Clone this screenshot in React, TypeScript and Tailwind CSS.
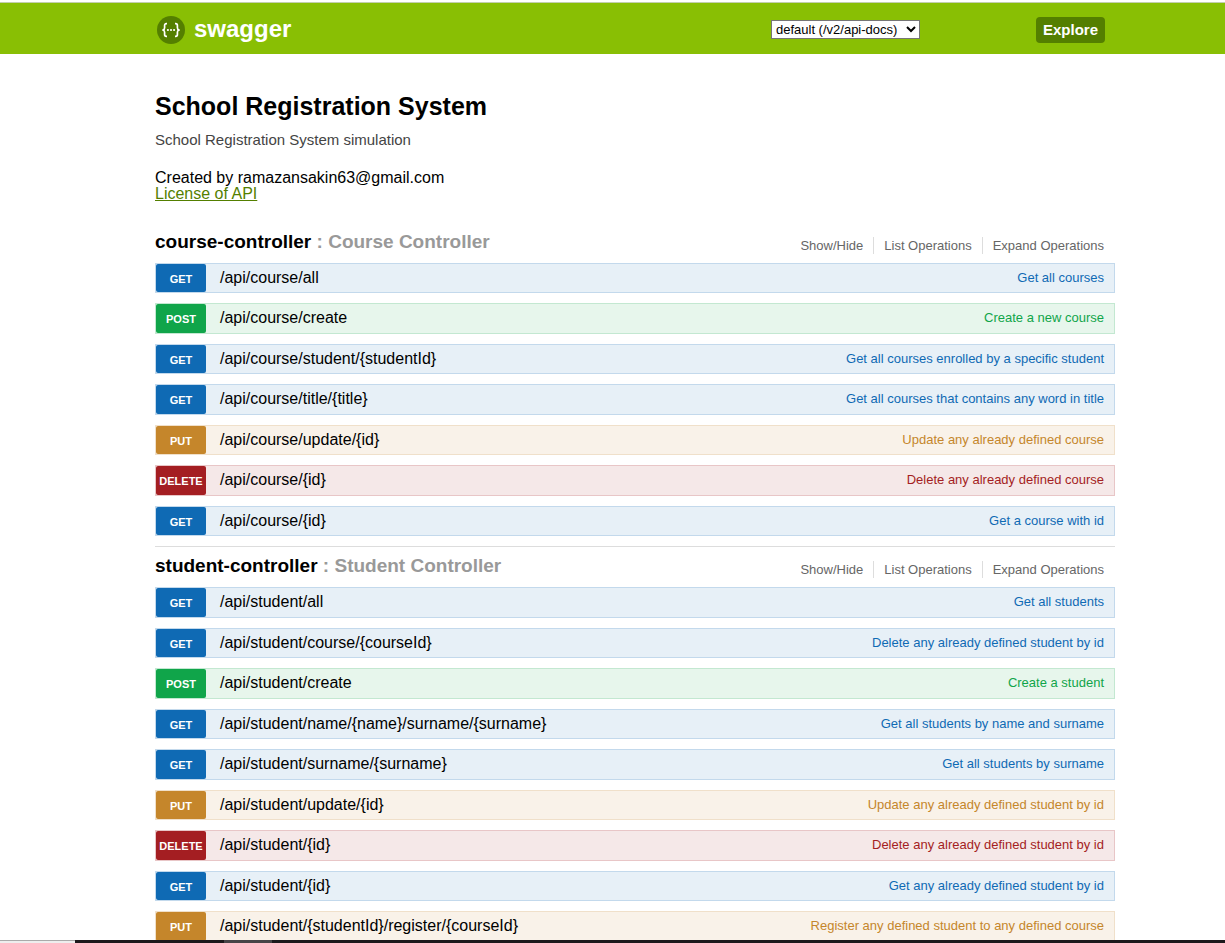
type Method = 'GET' | 'POST' | 'PUT' | 'DELETE';
type Operation = [Method, string, string];

const courseOperations: Operation[] = [
  ['GET', '/api/course/all', 'Get all courses'],
  ['POST', '/api/course/create', 'Create a new course'],
  ['GET', '/api/course/student/{studentId}', 'Get all courses enrolled by a specific student'],
  ['GET', '/api/course/title/{title}', 'Get all courses that contains any word in title'],
  ['PUT', '/api/course/update/{id}', 'Update any already defined course'],
  ['DELETE', '/api/course/{id}', 'Delete any already defined course'],
  ['GET', '/api/course/{id}', 'Get a course with id'],
];

const studentOperations: Operation[] = [
  ['GET', '/api/student/all', 'Get all students'],
  ['GET', '/api/student/course/{courseId}', 'Delete any already defined student by id'],
  ['POST', '/api/student/create', 'Create a student'],
  ['GET', '/api/student/name/{name}/surname/{surname}', 'Get all students by name and surname'],
  ['GET', '/api/student/surname/{surname}', 'Get all students by surname'],
  ['PUT', '/api/student/update/{id}', 'Update any already defined student by id'],
  ['DELETE', '/api/student/{id}', 'Delete any already defined student by id'],
  ['GET', '/api/student/{id}', 'Get any already defined student by id'],
  ['PUT', '/api/student/{studentId}/register/{courseId}', 'Register any defined student to any defined course'],
];

const styles: Record<Method, { row: string; badge: string; text: string }> = {
  GET: { row: 'border-[#c3d9ec] bg-[#e7f0f7]', badge: 'bg-[#0f6ab4]', text: 'text-[#0f6ab4]' },
  POST: { row: 'border-[#c3e8d1] bg-[#e7f6ec]', badge: 'bg-[#10a54a]', text: 'text-[#10a54a]' },
  PUT: { row: 'border-[#f0e0ca] bg-[#f9f2e9]', badge: 'bg-[#c5862b]', text: 'text-[#c5862b]' },
  DELETE: { row: 'border-[#e8c6c7] bg-[#f5e8e8]', badge: 'bg-[#a41e22]', text: 'text-[#a41e22]' },
};

function OperationRow({ operation: [method, path, summary] }: { operation: Operation }) {
  const style = styles[method];
  return (
    <li className={`flex items-stretch border ${style.row}`}>
      <a
        href="#operation"
        className={`flex w-[50px] shrink-0 items-center justify-center rounded-xs pt-0.5 text-[11px] font-bold text-white ${style.badge}`}
      >
        {method}
      </a>
      <a href="#operation" className="pl-3.5 text-base leading-7 text-black">
        {path}
      </a>
      <a href="#operation" className={`ml-auto pr-2.5 text-[13px] leading-7 ${style.text}`}>
        {summary}
      </a>
    </li>
  );
}

function Resource({
  name,
  description,
  operations,
  listClass,
}: {
  name: string;
  description: string;
  operations: Operation[];
  listClass: string;
}) {
  return (
    <section>
      <div className="flex h-10 items-center justify-between pr-px">
        <h2 className="pb-0.5 text-[19px] font-bold text-[#999]">
          <a href="#resource" className="text-black">
            {name}
          </a>{' '}
          : {description}
        </h2>
        <ul className="flex divide-x divide-[#ddd] pt-1 text-[13px] leading-[17px] text-[#666]">
          <li className="px-2.5">
            <a href="#show">Show/Hide</a>
          </li>
          <li className="px-2.5">
            <a href="#list">List Operations</a>
          </li>
          <li className="px-2.5">
            <a href="#expand">Expand Operations</a>
          </li>
        </ul>
      </div>
      <ul className={`grid auto-rows-fr gap-2.5 ${listClass}`}>
        {operations.map((operation) => (
          <OperationRow key={operation[0] + operation[1]} operation={operation} />
        ))}
      </ul>
    </section>
  );
}

function Logo() {
  return (
    <svg viewBox="0 0 28 28" className="size-7" aria-hidden="true">
      <circle cx="14" cy="14" r="14" fill="#547f00" />
      <g fill="none" stroke="#fff" strokeWidth="1.7" strokeLinejoin="round">
        <path d="M10 7.7H9.3C8 7.7 7.6 8.4 7.6 9.6v2.2c0 1.3-.5 2-1.7 2.2 1.2.2 1.7.9 1.7 2.2v2.2c0 1.2.4 1.9 1.7 1.9h.7" />
        <path d="M18 7.7h.7c1.3 0 1.7.7 1.7 1.9v2.2c0 1.3.5 2 1.7 2.2-1.2.2-1.7.9-1.7 2.2v2.2c0 1.2-.4 1.9-1.7 1.9H18" />
      </g>
      <g fill="#fff">
        <circle cx="10.9" cy="14" r="1.1" />
        <circle cx="14" cy="14" r="1.1" />
        <circle cx="17.1" cy="14" r="1.1" />
      </g>
    </svg>
  );
}

export default function App() {
  return (
    <div className="flex h-screen flex-col overflow-hidden bg-white font-['Liberation_Sans',Arial,sans-serif] text-black">
      <header className="mt-0.5 flex h-13 shrink-0 items-center border-t border-[#c3cfae] bg-[#89bf04] pt-0.5 pr-[120px] pl-[157px]">
        <a href="#home" className="flex items-center gap-[9px] text-2xl font-bold text-white">
          <Logo />
          <span className="pb-0.5">swagger</span>
        </a>
        <form className="ml-auto flex items-center" onSubmit={(event) => event.preventDefault()}>
          <select
            aria-label="API definition"
            className="mr-[116px] h-[19px] w-[149px] border border-[#767676] bg-white text-[13px] text-black"
          >
            <option>default (/v2/api-docs)</option>
          </select>
          <button type="submit" className="rounded-sm bg-[#547f00] px-[7px] py-[3px] text-[15px] leading-5 font-bold text-white">
            Explore
          </button>
        </form>
      </header>

      <main className="min-h-0 flex-1 overflow-hidden pr-[110px] pl-[155px]">
        <div className="pt-9">
          <h1 className="text-[25px] leading-8 font-bold">School Registration System</h1>
          <p className="pt-2 text-[15px] leading-5 text-[#444]">School Registration System simulation</p>
          <div className="pt-5 pb-[21px] text-base leading-4">
            <p>Created by ramazansakin63@gmail.com</p>
            <a href="#license" className="text-[#547f00] underline">
              License of API
            </a>
          </div>
        </div>
        <Resource
          name="course-controller"
          description="Course Controller"
          operations={courseOperations}
          listClass="min-h-[273px]"
        />
        <div className="mt-2.5 border-t border-[#ddd]">
          <Resource
            name="student-controller"
            description="Student Controller"
            operations={studentOperations}
            listClass="min-h-[355px]"
          />
        </div>
      </main>

      <footer className="flex h-[3px] shrink-0 bg-[#1c191c]">
        <div className="w-[75px] border-t border-[#aaa] bg-[#eee]" />
        <div className="ml-[149px] w-12 bg-[#474447]" />
      </footer>
    </div>
  );
}
